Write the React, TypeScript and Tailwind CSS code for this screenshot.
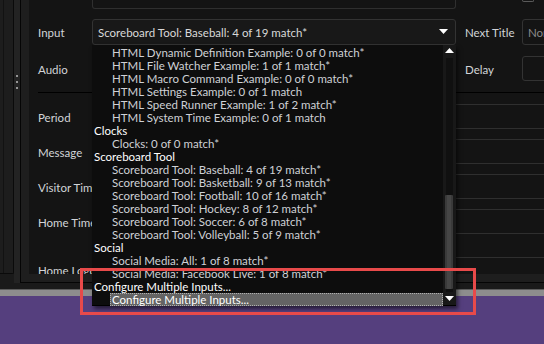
type Row = { text: string; header?: boolean; selected?: boolean };

const rows: Row[] = [
  { text: 'HTML Dynamic Definition Example: 0 of 0 match*' },
  { text: 'HTML File Watcher Example: 1 of 1 match*' },
  { text: 'HTML Macro Command Example: 0 of 0 match*' },
  { text: 'HTML Settings Example: 0 of 1 match' },
  { text: 'HTML Speed Runner Example: 1 of 2 match*' },
  { text: 'HTML System Time Example: 0 of 1 match' },
  { text: 'Clocks', header: true },
  { text: 'Clocks: 0 of 0 match*' },
  { text: 'Scoreboard Tool', header: true },
  { text: 'Scoreboard Tool: Baseball: 4 of 19 match*' },
  { text: 'Scoreboard Tool: Basketball: 9 of 13 match*' },
  { text: 'Scoreboard Tool: Football: 10 of 16 match*' },
  { text: 'Scoreboard Tool: Hockey: 8 of 12 match*' },
  { text: 'Scoreboard Tool: Soccer: 6 of 8 match*' },
  { text: 'Scoreboard Tool: Volleyball: 5 of 9 match*' },
  { text: 'Social', header: true },
  { text: 'Social Media: All: 1 of 8 match*' },
  { text: 'Social Media: Facebook Live: 1 of 8 match*' },
  { text: 'Configure Multiple Inputs...', header: true },
  { text: 'Configure Multiple Inputs...', selected: true }
];

const Tri = ({ up = false }: { up?: boolean }) => (
  <svg width="9" height="6" viewBox="0 0 9 6">
    <polygon points={up ? '4.5,0 9,5 0,5' : '0,0 9,0 4.5,5'} fill="#ffffff" />
  </svg>
);

const FieldRow = ({ label, className = '' }: { label: string; className?: string }) => (
  <div className={`flex h-[25px] shrink-0 items-center ${className}`}>
    <div className="w-[63px] shrink-0 pl-[9px] pt-[2px] whitespace-nowrap text-[#d2d4d8]">{label}</div>
    <div className="h-full flex-1 -mr-4 rounded-[3px] border border-[#2f2f2f]" />
  </div>
);

const App = () => {
  return (
    <div className="relative h-[344px] w-[544px] overflow-hidden bg-[#1a1a1a] font-['Lato',sans-serif] text-[11.5px] leading-none">
      <div className="flex h-[283px]">
        <div className="h-[274px] w-[14px] shrink-0 rounded-br-[2px] border-r border-b border-[#0a0a0a] bg-[#1d1d1d]">
          <div className="ml-[3px] h-full w-px bg-[#121212]" />
        </div>
        <div className="flex w-[6px] shrink-0 flex-col items-center gap-[4px] bg-[#232323] pt-[75px]">
          <div className="h-[2px] w-[2px] rounded-full bg-[#bdbdbd]" />
          <div className="h-[2px] w-[2px] rounded-full bg-[#bdbdbd]" />
          <div className="h-[2px] w-[2px] rounded-full bg-[#bdbdbd]" />
        </div>
        <div className="flex-1 border-l border-b border-[#050505] bg-[#1e1e1e] pl-[8px] pb-[8px]">
          <div className="flex h-[274px] flex-col overflow-hidden bg-[#141414]">
            <div className="flex h-[92px] shrink-0 flex-col">
              <div className="flex h-[19px] shrink-0">
                <div className="w-[63px] shrink-0" />
                <div className="h-[9px] w-[364px] rounded-b-[3px] border-x border-b border-[#2f2f2f]" />
                <div className="ml-[66px] h-[2px] w-[12px] rounded-b-[2px] border-x border-b border-[#5a5a5a]" />
              </div>
              <div className="flex h-[26px] shrink-0 items-center">
                <div className="w-[63px] shrink-0 pl-[9px] pt-[2px] text-[#d2d4d8]">Input</div>
                <div className="flex h-full w-[364px] shrink-0 items-center justify-between rounded-[3px] border border-[#333333] bg-[#181818] pl-[5px] pr-[7px] text-[#d8d8d8]">
                  <span className="pt-[2px]">Scoreboard Tool: Baseball: 4 of 19 match*</span>
                  <Tri />
                </div>
                <div className="w-[66px] shrink-0 whitespace-nowrap pl-[9px] pt-[2px] text-[#d2d4d8]">Next Title</div>
                <div className="flex h-full flex-1 -mr-4 items-center overflow-hidden rounded-[3px] border border-[#333333] pl-[5px] pt-[2px] text-[#8a8a8a]">None</div>
              </div>
              <div className="mt-[11px] flex h-[25px] shrink-0 items-center">
                <div className="w-[63px] shrink-0 pl-[9px] pt-[2px] text-[#d2d4d8]">Audio</div>
                <div className="w-[364px] shrink-0" />
                <div className="w-[66px] shrink-0 pl-[9px] pt-[2px] text-[#d2d4d8]">Delay</div>
                <div className="h-full flex-1 -mr-4 rounded-[3px] border border-[#333333]" />
              </div>
            </div>
            <div className="ml-[9px] h-px shrink-0 bg-black" />
            <div className="flex shrink-0 flex-col pt-[11px]">
              <FieldRow label="Period" />
              <FieldRow label="Message" className="mt-[10px]" />
              <FieldRow label="Visitor Timeouts" className="mt-[10px]" />
              <FieldRow label="Home Timeouts" className="mt-[10px]" />
              <FieldRow label="Home Logo" className="mt-[23px]" />
            </div>
          </div>
        </div>
      </div>
      <div className="h-[6px] bg-[#1a1a1a]" />
      <div className="h-px bg-[#5c5c5c]" />
      <div className="h-[6px] bg-[#8d8d8d]" />
      <div className="h-full bg-[#553f7e]" />

      {/* dropdown list */}
      <div className="absolute left-[92px] top-[45px] flex h-[261px] w-[364px] border-b border-black bg-[#0d0d0d] shadow-[2px_3px_4px_rgba(0,0,0,0.55)]">
        <div className="flex-1 pt-px">
          {rows.map((r, i) => (
            <div key={i} className="flex h-[13px] items-center whitespace-nowrap">
              {r.header ? (
                <span className="pl-[2px] pt-px text-white">{r.text}</span>
              ) : r.selected ? (
                <span className="ml-[18px] flex h-[13px] flex-1 items-center border border-dotted border-[#b0b0b0] bg-[#646464] pl-px pt-px text-white">
                  {r.text}
                </span>
              ) : (
                <span className="pl-[20px] pt-px text-[#cfd1d6]">{r.text}</span>
              )}
            </div>
          ))}
        </div>
        <div className="flex w-[13px] flex-col items-center bg-[#181818] py-[3px]">
          <Tri up />
          <div className="relative mt-[4px] w-[7px] flex-1 bg-[#101010]">
            <div className="absolute left-0 top-[137px] h-[94px] w-[8px] -ml-px rounded-[1px] bg-[#3a3a3a]">
              <div className="mx-auto h-full w-[4px] bg-[#454545]" />
            </div>
          </div>
          <div className="mt-[4px]">
            <Tri />
          </div>
        </div>
      </div>

      {/* annotation */}
      <div className="absolute left-[80px] top-[268px] h-[47px] w-[396px] border-[3px] border-[#e84a4a]" />
    </div>
  );
};

export default App;
